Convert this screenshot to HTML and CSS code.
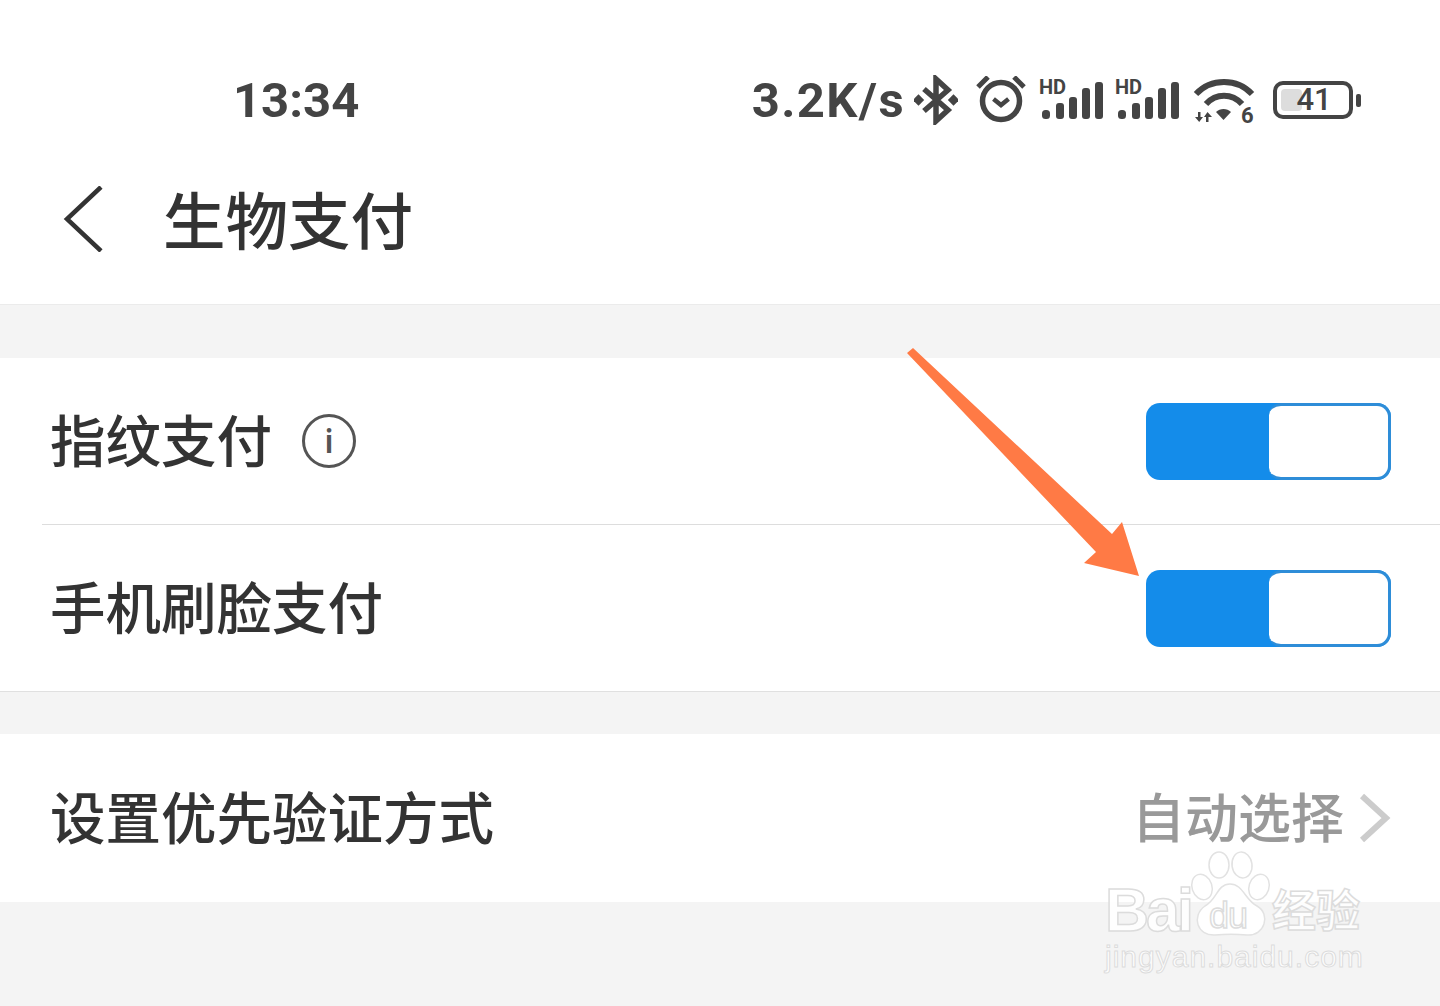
FILE: index.html
```html
<!DOCTYPE html>
<html lang="zh-CN">
  <head>
    <meta charset="UTF-8" />
    <meta name="viewport" content="width=device-width, initial-scale=1.0" />
    <title>生物支付</title>
    <link rel="stylesheet" href="styles.css">
  </head>
  <body>
    <header class="top">
      <div class="status">
        <span class="time">13:34</span>
        <div class="status-right">
          <span class="speed">3.2K/s</span>
          <svg class="ic-bt" width="44" height="50" viewBox="0 0 44 50" fill="none" stroke="#444" stroke-width="5.500">
            <path d="M10 14 L34 35 L22 46 V4 L34 15 L10 36" />
            <rect x="0.500" y="21" width="8" height="8" fill="#444" stroke="none" transform="rotate(45 4.500 25)" />
            <rect x="35.500" y="21" width="8" height="8" fill="#444" stroke="none" transform="rotate(45 39.500 25)" />
          </svg>
          <svg class="ic-alarm" width="50" height="48" viewBox="0 0 50 48" fill="none" stroke="#444">
            <circle cx="25" cy="25" r="18.500" stroke-width="5.500" />
            <path d="M17.500 23 L25 29 L32.500 23" stroke-width="4.500" />
            <path d="M2 11 L12 1 M48 11 L38 1" stroke-width="5" />
          </svg>
          <svg class="ic-signal" width="64" height="46" viewBox="0 0 64 46">
            <text x="0" y="17" class="hd">HD</text>
            <rect x="3" y="33" width="8" height="9" rx="3.500" />
            <rect x="17" y="26" width="8" height="16" rx="3" />
            <rect x="30" y="20" width="8" height="22" rx="3" />
            <rect x="43" y="11" width="8" height="31" rx="3" />
            <rect x="56" y="5" width="8" height="37" rx="3" />
          </svg>
          <svg class="ic-signal" width="64" height="46" viewBox="0 0 64 46">
            <text x="0" y="17" class="hd">HD</text>
            <rect x="3" y="33" width="8" height="9" rx="3.500" />
            <rect x="17" y="26" width="8" height="16" rx="3" />
            <rect x="30" y="20" width="8" height="22" rx="3" />
            <rect x="43" y="11" width="8" height="31" rx="3" />
            <rect x="56" y="5" width="8" height="37" rx="3" />
          </svg>
          <svg class="ic-wifi" width="60" height="50" viewBox="0 0 60 50" fill="none" stroke="#444" stroke-width="6">
            <path d="M2 19 C17 3 43 3 58 19" />
            <path d="M12 29 C22 18 38 18 48 29" />
            <path d="M22 37 C26 33 33 33 37 37 L29.500 45 Z" fill="#444" stroke="none" />
            <path d="M4 37 H6.500 V42 H9 L5.200 47 L1 42 H4 Z M12 47 H14.500 V42 H18 L13.500 37 L10 42 H12 Z" fill="#444" stroke="none" />
            <text x="47" y="48" class="wifi-six">6</text>
          </svg>
          <div class="battery">
            <div class="battery-box">
              <span class="battery-fill"></span>
              <span class="battery-num">41</span>
            </div>
            <span class="battery-cap"></span>
          </div>
        </div>
      </div>
      <div class="titlebar">
        <svg class="back" width="42" height="66" viewBox="0 0 42 66" fill="none" stroke="#333" stroke-width="4.500">
          <path d="M38 1 L4 33 L38 65" />
        </svg>
        <h1>生物支付</h1>
      </div>
    </header>

    <section class="group group-pay">
      <div class="row row-line">
        <div class="row-left">
          <span class="label">指纹支付</span>
          <span class="info">i</span>
        </div>
        <div class="toggle"><span class="thumb"></span></div>
      </div>
      <div class="row">
        <span class="label">手机刷脸支付</span>
        <div class="toggle"><span class="thumb"></span></div>
      </div>
    </section>

    <section class="group group-verify">
      <div class="row row-tall">
        <span class="label">设置优先验证方式</span>
        <div class="row-right">
          <span class="value">自动选择</span>
          <svg width="32" height="50" viewBox="0 0 32 50" fill="none" stroke="#ccc" stroke-width="6">
            <path d="M3 3 L27 25 L3 47" />
          </svg>
        </div>
      </div>
    </section>

    <!-- annotation arrow -->
    <svg class="arrow" width="240" height="240" viewBox="0 0 240 240">
      <path d="M2 9 L8 4 L207 190 L217 178 L234 232 L179 219 L191 208 Z" fill="#ff7a45" />
    </svg>

    <div class="watermark">
      <svg class="paw" width="84" height="90" viewBox="0 0 84 90" fill="#fff" stroke="#e2e2e2" stroke-width="1.500">
        <ellipse cx="30" cy="15" rx="10" ry="13" />
        <ellipse cx="53" cy="15" rx="10" ry="13" transform="rotate(-8 53 15)" />
        <ellipse cx="13" cy="37" rx="10" ry="13" transform="rotate(-18 13 37)" />
        <ellipse cx="70" cy="37" rx="10" ry="13" transform="rotate(18 70 37)" />
        <path d="M41 34 C54 34 56 50 68 56 C82 64 76 86 58 85 C48 84 36 84 26 85 C8 86 2 66 16 56 C28 50 28 34 41 34 Z" />
      </svg>
      <span class="wm-bai">Bai</span>
      <span class="wm-du">du</span>
      <span class="wm-cn">经验</span>
      <span class="wm-url">jingyan.baidu.com</span>
    </div>
  </body>
</html>
```

FILE: styles.css
```css
html,
body {
  margin: 0;
  padding: 0;
}

body {
  width: 1440px;
  height: 1006px;
  position: relative;
  overflow: hidden;
  background-color: #f4f4f4;
  color: #333;
  font-family: "Noto Sans CJK SC", "Noto Sans", sans-serif;
}

.top {
  height: 304px;
  background-color: #fff;
  border-bottom: 1px solid #ebebeb;
}

.status {
  height: 148px;
  padding: 52px 79px 0 233px;
  box-sizing: border-box;
  display: flex;
  align-items: center;
  justify-content: space-between;
  color: #444;
}

.time {
  font-family: Roboto, sans-serif;
  font-weight: 700;
  font-size: 49px;
}

.status-right {
  display: flex;
  align-items: center;
}

.speed {
  font-family: Roboto, sans-serif;
  font-weight: 700;
  font-size: 49px;
  letter-spacing: 1.4px;
  margin-right: 9px;
}

.ic-bt {
  margin-right: 18px;
}

.ic-alarm {
  margin-right: 13px;
}

.ic-signal {
  fill: #444;
  margin-right: 12px;
  overflow: visible;
}

.ic-signal + .ic-wifi {
  margin-left: 3px;
}

.ic-wifi {
  overflow: visible;
}

.hd {
  font-family: Roboto, sans-serif;
  font-weight: 700;
  font-size: 20px;
}

.wifi-six {
  font-family: Roboto, sans-serif;
  font-weight: 700;
  font-size: 22px;
  fill: #444;
  stroke: none;
}

.battery {
  display: flex;
  align-items: center;
  margin-left: 19px;
}

.battery-box {
  width: 80px;
  height: 38px;
  box-sizing: border-box;
  border: 4px solid #444;
  border-radius: 10px;
  display: flex;
  align-items: center;
  justify-content: center;
  position: relative;
}

.battery-fill {
  position: absolute;
  left: 4px;
  top: 4px;
  bottom: 4px;
  width: 29%;
  background-color: #ddd;
  border-radius: 4px;
}

.battery-num {
  position: relative;
  font-family: Roboto, sans-serif;
  font-size: 31px;
  font-weight: 500;
  line-height: 30px;
  margin-left: 2px;
}

.battery-cap {
  width: 5px;
  height: 13px;
  margin-left: 3px;
  background-color: #444;
  border-radius: 2px;
}

.titlebar {
  height: 146px;
  padding: 0 0 5px 63px;
  box-sizing: border-box;
  display: flex;
  align-items: center;
}

.back {
  margin-right: 58px;
}

.titlebar h1 {
  margin: 0;
  font-size: 62.5px;
  font-weight: 500;
  line-height: 1;
}

.group {
  background-color: #fff;
}

.group-pay {
  margin-top: 53px;
  border-bottom: 1px solid #e0e0e0;
}

.group-verify {
  margin-top: 42px;
}

.row {
  height: 166px;
  margin-left: 42px;
  padding: 0 49px 0 8px;
  box-sizing: border-box;
  display: flex;
  align-items: center;
  justify-content: space-between;
}

.row-line {
  height: 167px;
  border-bottom: 1px solid #ddd;
}

.row-tall {
  height: 168px;
}

.row-left,
.row-right {
  display: flex;
  align-items: center;
}

.label {
  font-size: 55.5px;
  font-weight: 500;
  line-height: 1;
  margin-bottom: 4px;
}

.info {
  width: 54px;
  height: 54px;
  box-sizing: border-box;
  margin-left: 30px;
  border: 3px solid #555;
  border-radius: 50%;
  display: flex;
  align-items: center;
  justify-content: center;
  font-family: "Noto Sans", sans-serif;
  font-size: 32px;
  font-weight: 600;
  line-height: 1;
  color: #555;
}

.toggle {
  width: 245px;
  height: 77px;
  display: flex;
  justify-content: flex-end;
  background-color: #148cea;
  border-radius: 14px;
}

.thumb {
  width: 122px;
  box-sizing: border-box;
  background-color: #fff;
  border: 3px solid #2e8dd8;
  border-left: 0;
  border-radius: 12px 14px 14px 12px;
}

.value {
  font-size: 53px;
  font-weight: 500;
  color: #999;
  line-height: 1;
  margin: 0 15px 5px 0;
}

.arrow {
  position: absolute;
  left: 905px;
  top: 344px;
}

.watermark {
  position: absolute;
  left: 1105px;
  top: 850px;
  width: 262px;
  height: 130px;
}

.paw {
  position: absolute;
  left: 84px;
  top: 0;
}

.wm-bai,
.wm-du,
.wm-cn,
.wm-url {
  position: absolute;
  white-space: nowrap;
  line-height: 1;
  color: rgba(255, 255, 255, 0.9);
  -webkit-text-stroke: 1.5px #dcdcdc;
}

.wm-bai {
  left: 0;
  top: 30px;
  font-family: "Liberation Sans", sans-serif;
  font-size: 61px;
  font-weight: 700;
  letter-spacing: -3px;
}

.wm-du {
  left: 104px;
  top: 48px;
  font-family: "Liberation Sans", sans-serif;
  font-size: 36px;
  letter-spacing: -1px;
}

.wm-cn {
  left: 167px;
  top: 36px;
  font-size: 44px;
  font-weight: 700;
}

.wm-url {
  left: 0;
  top: 92px;
  font-family: "Liberation Sans", sans-serif;
  font-size: 30px;
  letter-spacing: 1px;
  -webkit-text-stroke-width: 1px;
}
```
